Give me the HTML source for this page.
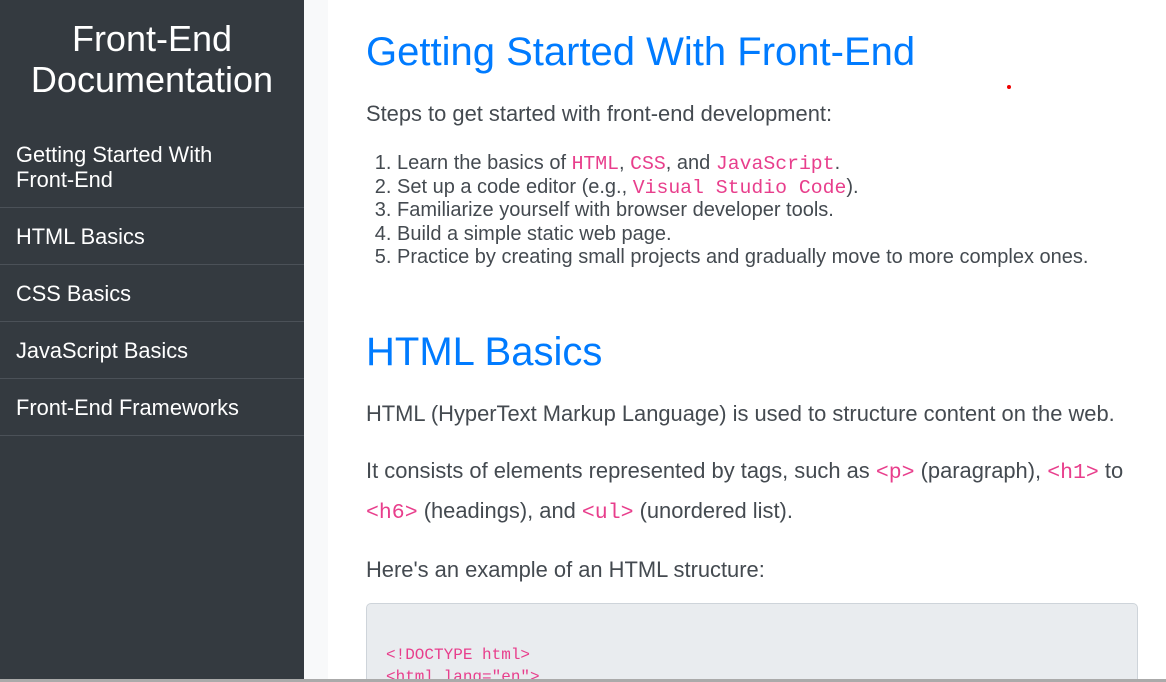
<!DOCTYPE html>
<html><head><style>
*{box-sizing:border-box}
html,body{margin:0;width:1166px;height:682px;overflow:hidden}
body{font-family:"Liberation Sans",Arial,sans-serif;background:#fff;position:relative}
#side{position:absolute;left:0;top:0;width:304px;height:682px;background:#343a40;color:#fff}
#side h2{margin:0;padding-top:18px;font-weight:normal;font-size:36px;line-height:41px;text-align:center;height:126px}
#side a{display:block;color:#fff;text-decoration:none;font-size:21.8px;line-height:25px;padding:16px 50px 15px 16px;border-bottom:1px solid #4b5158}
#strip{position:absolute;left:304px;top:0;width:24px;height:682px;background:#f8f9fa}
#main{position:absolute;left:366px;top:0;width:772px;height:679px;overflow:hidden;color:#444a50}
h1{color:#007bff;font-weight:normal;font-size:40px;line-height:48px;margin:0}
p{font-size:21.9px;line-height:38px;margin:0}
code{font-family:"Liberation Mono",monospace;color:#e83e8c;font-size:21.5px}
ol{margin:0;padding-left:31px;font-size:20px;line-height:23.5px}
ol code{font-size:19.8px;line-height:1}
pre{margin:14px 0 0;background:#e9ecef;border:1px solid #ced4da;border-radius:5px;padding:40px 19px 0;font-family:"Liberation Mono",monospace;font-size:16px;line-height:22px;color:#e83e8c;height:120px;overflow:hidden}
#bar{position:absolute;left:0;top:679px;width:1166px;height:3px;background:#aaa}
</style></head><body>
<div id="side">
<h2>Front-End<br>Documentation</h2>
<a>Getting Started With Front-End</a>
<a>HTML Basics</a>
<a>CSS Basics</a>
<a>JavaScript Basics</a>
<a>Front-End Frameworks</a>
</div>
<div id="strip"></div>
<div id="main">
<h1 style="margin-top:28px">Getting Started With Front-End</h1>
<p style="margin-top:19px">Steps to get started with front-end development:</p>
<ol style="margin-top:19px">
<li>Learn the basics of <code>HTML</code>, <code>CSS</code>, and <code>JavaScript</code>.</li>
<li>Set up a code editor (e.g., <code>Visual Studio Code</code>).</li>
<li>Familiarize yourself with browser developer tools.</li>
<li>Build a simple static web page.</li>
<li>Practice by creating small projects and gradually move to more complex ones.</li>
</ol>
<h1 style="margin-top:58px">HTML Basics</h1>
<p style="margin-top:19px">HTML (HyperText Markup Language) is used to structure content on the web.</p>
<p style="margin-top:19px">It consists of elements represented by tags, such as <code>&lt;p&gt;</code> (paragraph), <code>&lt;h1&gt;</code> to <code>&lt;h6&gt;</code> (headings), and <code>&lt;ul&gt;</code> (unordered list).</p>
<p style="margin-top:19px">Here's an example of an HTML structure:</p>
<pre>&lt;!DOCTYPE html&gt;
&lt;html lang="en"&gt;</pre>
</div>
<div style="position:absolute;left:1007px;top:85px;width:4px;height:4px;border-radius:2px;background:#e00"></div>
<div id="bar"></div>
</body></html>
